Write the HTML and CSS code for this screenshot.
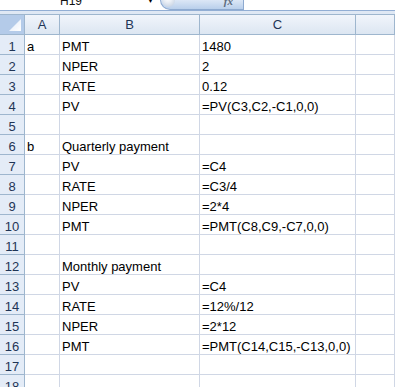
FILE: index.html
```html
<!DOCTYPE html>
<html lang="en">
<head>
    <meta charset="UTF-8">
    <title>PV and PMT worksheet</title>
    <link rel="stylesheet" href="styles.css">
</head>
<body>
    <div class="formula-bar">
        <div class="name-box">
            <span class="name">H19</span>
            <span class="drop">&#9660;</span>
        </div>
        <div class="fx-button">
            <span class="knob"></span>
            <span class="fx">fx</span>
        </div>
        <div class="formula-input"></div>
    </div>
    <div class="bar-gap"></div>

    <div class="sheet">
        <div class="corner">
            <svg width="14" height="14" viewBox="0 0 14 14">
                <defs>
                    <linearGradient id="tri" x1="0" y1="0" x2="1" y2="1">
                        <stop offset="0" stop-color="#dfe9f7"/>
                        <stop offset="1" stop-color="#ffffff"/>
                    </linearGradient>
                </defs>
                <polygon points="13,1 13,13 1,13" fill="url(#tri)"/>
            </svg>
        </div>
        <div class="ch">A</div>
        <div class="ch">B</div>
        <div class="ch">C</div>
        <div class="ch"></div>

        <div class="rh">1</div><div class="cell">a</div><div class="cell">PMT</div><div class="cell">1480</div><div class="cell"></div>
        <div class="rh">2</div><div class="cell"></div><div class="cell">NPER</div><div class="cell">2</div><div class="cell"></div>
        <div class="rh">3</div><div class="cell"></div><div class="cell">RATE</div><div class="cell">0.12</div><div class="cell"></div>
        <div class="rh">4</div><div class="cell"></div><div class="cell">PV</div><div class="cell">=PV(C3,C2,-C1,0,0)</div><div class="cell"></div>
        <div class="rh">5</div><div class="cell"></div><div class="cell"></div><div class="cell"></div><div class="cell"></div>
        <div class="rh">6</div><div class="cell">b</div><div class="cell">Quarterly payment</div><div class="cell"></div><div class="cell"></div>
        <div class="rh">7</div><div class="cell"></div><div class="cell">PV</div><div class="cell">=C4</div><div class="cell"></div>
        <div class="rh">8</div><div class="cell"></div><div class="cell">RATE</div><div class="cell">=C3/4</div><div class="cell"></div>
        <div class="rh">9</div><div class="cell"></div><div class="cell">NPER</div><div class="cell">=2*4</div><div class="cell"></div>
        <div class="rh">10</div><div class="cell"></div><div class="cell">PMT</div><div class="cell">=PMT(C8,C9,-C7,0,0)</div><div class="cell"></div>
        <div class="rh">11</div><div class="cell"></div><div class="cell"></div><div class="cell"></div><div class="cell"></div>
        <div class="rh">12</div><div class="cell"></div><div class="cell">Monthly payment</div><div class="cell"></div><div class="cell"></div>
        <div class="rh">13</div><div class="cell"></div><div class="cell">PV</div><div class="cell">=C4</div><div class="cell"></div>
        <div class="rh">14</div><div class="cell"></div><div class="cell">RATE</div><div class="cell">=12%/12</div><div class="cell"></div>
        <div class="rh">15</div><div class="cell"></div><div class="cell">NPER</div><div class="cell">=2*12</div><div class="cell"></div>
        <div class="rh">16</div><div class="cell"></div><div class="cell">PMT</div><div class="cell">=PMT(C14,C15,-C13,0,0)</div><div class="cell"></div>
        <div class="rh">17</div><div class="cell"></div><div class="cell"></div><div class="cell"></div><div class="cell"></div>
        <div class="rh">18</div><div class="cell"></div><div class="cell"></div><div class="cell"></div><div class="cell"></div>
    </div>
</body>
</html>
```

FILE: styles.css
```css
* {
    box-sizing: border-box;
    margin: 0;
    padding: 0;
}

html,
body {
    height: 100%;
    overflow: hidden;
}

body {
    background: #ffffff;
    font-family: "Liberation Sans", Arial, sans-serif;
    font-size: 13px;
    color: #000;
}

/* formula bar, only its lower edge is visible */
.formula-bar {
    display: flex;
    height: 11px;
    overflow: hidden;
    border-bottom: 1px solid #92aed4;
    background: #fff;
}

.name-box {
    width: 160px;
    display: flex;
    align-items: flex-end;
    padding-left: 60px;
    gap: 65px;
}

.name {
    font-size: 12px;
    line-height: 12px;
    margin-bottom: 3px;
    color: #111;
}

.drop {
    font-size: 7px;
    line-height: 7px;
    margin-bottom: 6px;
    color: #000;
}

.fx-button {
    width: 84px;
    height: 10px;
    display: flex;
    align-items: flex-end;
    justify-content: space-between;
    padding: 0 10px 4px 1px;
    border: 1px solid #8eaad0;
    border-top: none;
    border-bottom-left-radius: 10px;
    background: linear-gradient(#dce7f6, #b9cfeb);
}

.knob {
    width: 13px;
    height: 13px;
    border-radius: 50%;
    margin-bottom: -2px;
    background: radial-gradient(circle at 45% 35%, #ffffff 0, #e9eef5 35%, #b9c8dc 100%);
}

.fx {
    font-family: "Liberation Serif", serif;
    font-style: italic;
    font-weight: bold;
    font-size: 11px;
    line-height: 8px;
    color: #5d6b7d;
}

.formula-input {
    flex: 1;
    background: #fff;
}

.bar-gap {
    height: 4px;
    background: #dfe8f4;
    border-bottom: 1px solid #9eb6ce;
}

/* worksheet grid */
.sheet {
    display: grid;
    grid-template-columns: 25px 35px 140px 156px 1fr;
    grid-auto-rows: 20px;
}

.corner {
    background: #b4cbe9;
    border-right: 1px solid #9eb6ce;
    border-bottom: 1px solid #9eb6ce;
    display: flex;
    align-items: flex-end;
    justify-content: flex-end;
    padding: 0 2px 2px 0;
}

.ch {
    background: linear-gradient(#f1f5fb, #dce6f2);
    border-right: 1px solid #9eb6ce;
    border-bottom: 1px solid #9eb6ce;
    display: flex;
    align-items: center;
    justify-content: center;
    color: #1f3556;
    font-size: 13px;
}

.rh {
    background: #e4ecf7;
    border-right: 1px solid #9eb6ce;
    border-bottom: 1px solid #9eb6ce;
    display: flex;
    align-items: flex-end;
    justify-content: center;
    line-height: 15px;
    color: #1f3556;
}

.cell {
    border-right: 1px solid #d0d7e5;
    border-bottom: 1px solid #d0d7e5;
    display: flex;
    align-items: flex-end;
    padding-left: 2px;
    line-height: 15px;
    white-space: nowrap;
}
```
